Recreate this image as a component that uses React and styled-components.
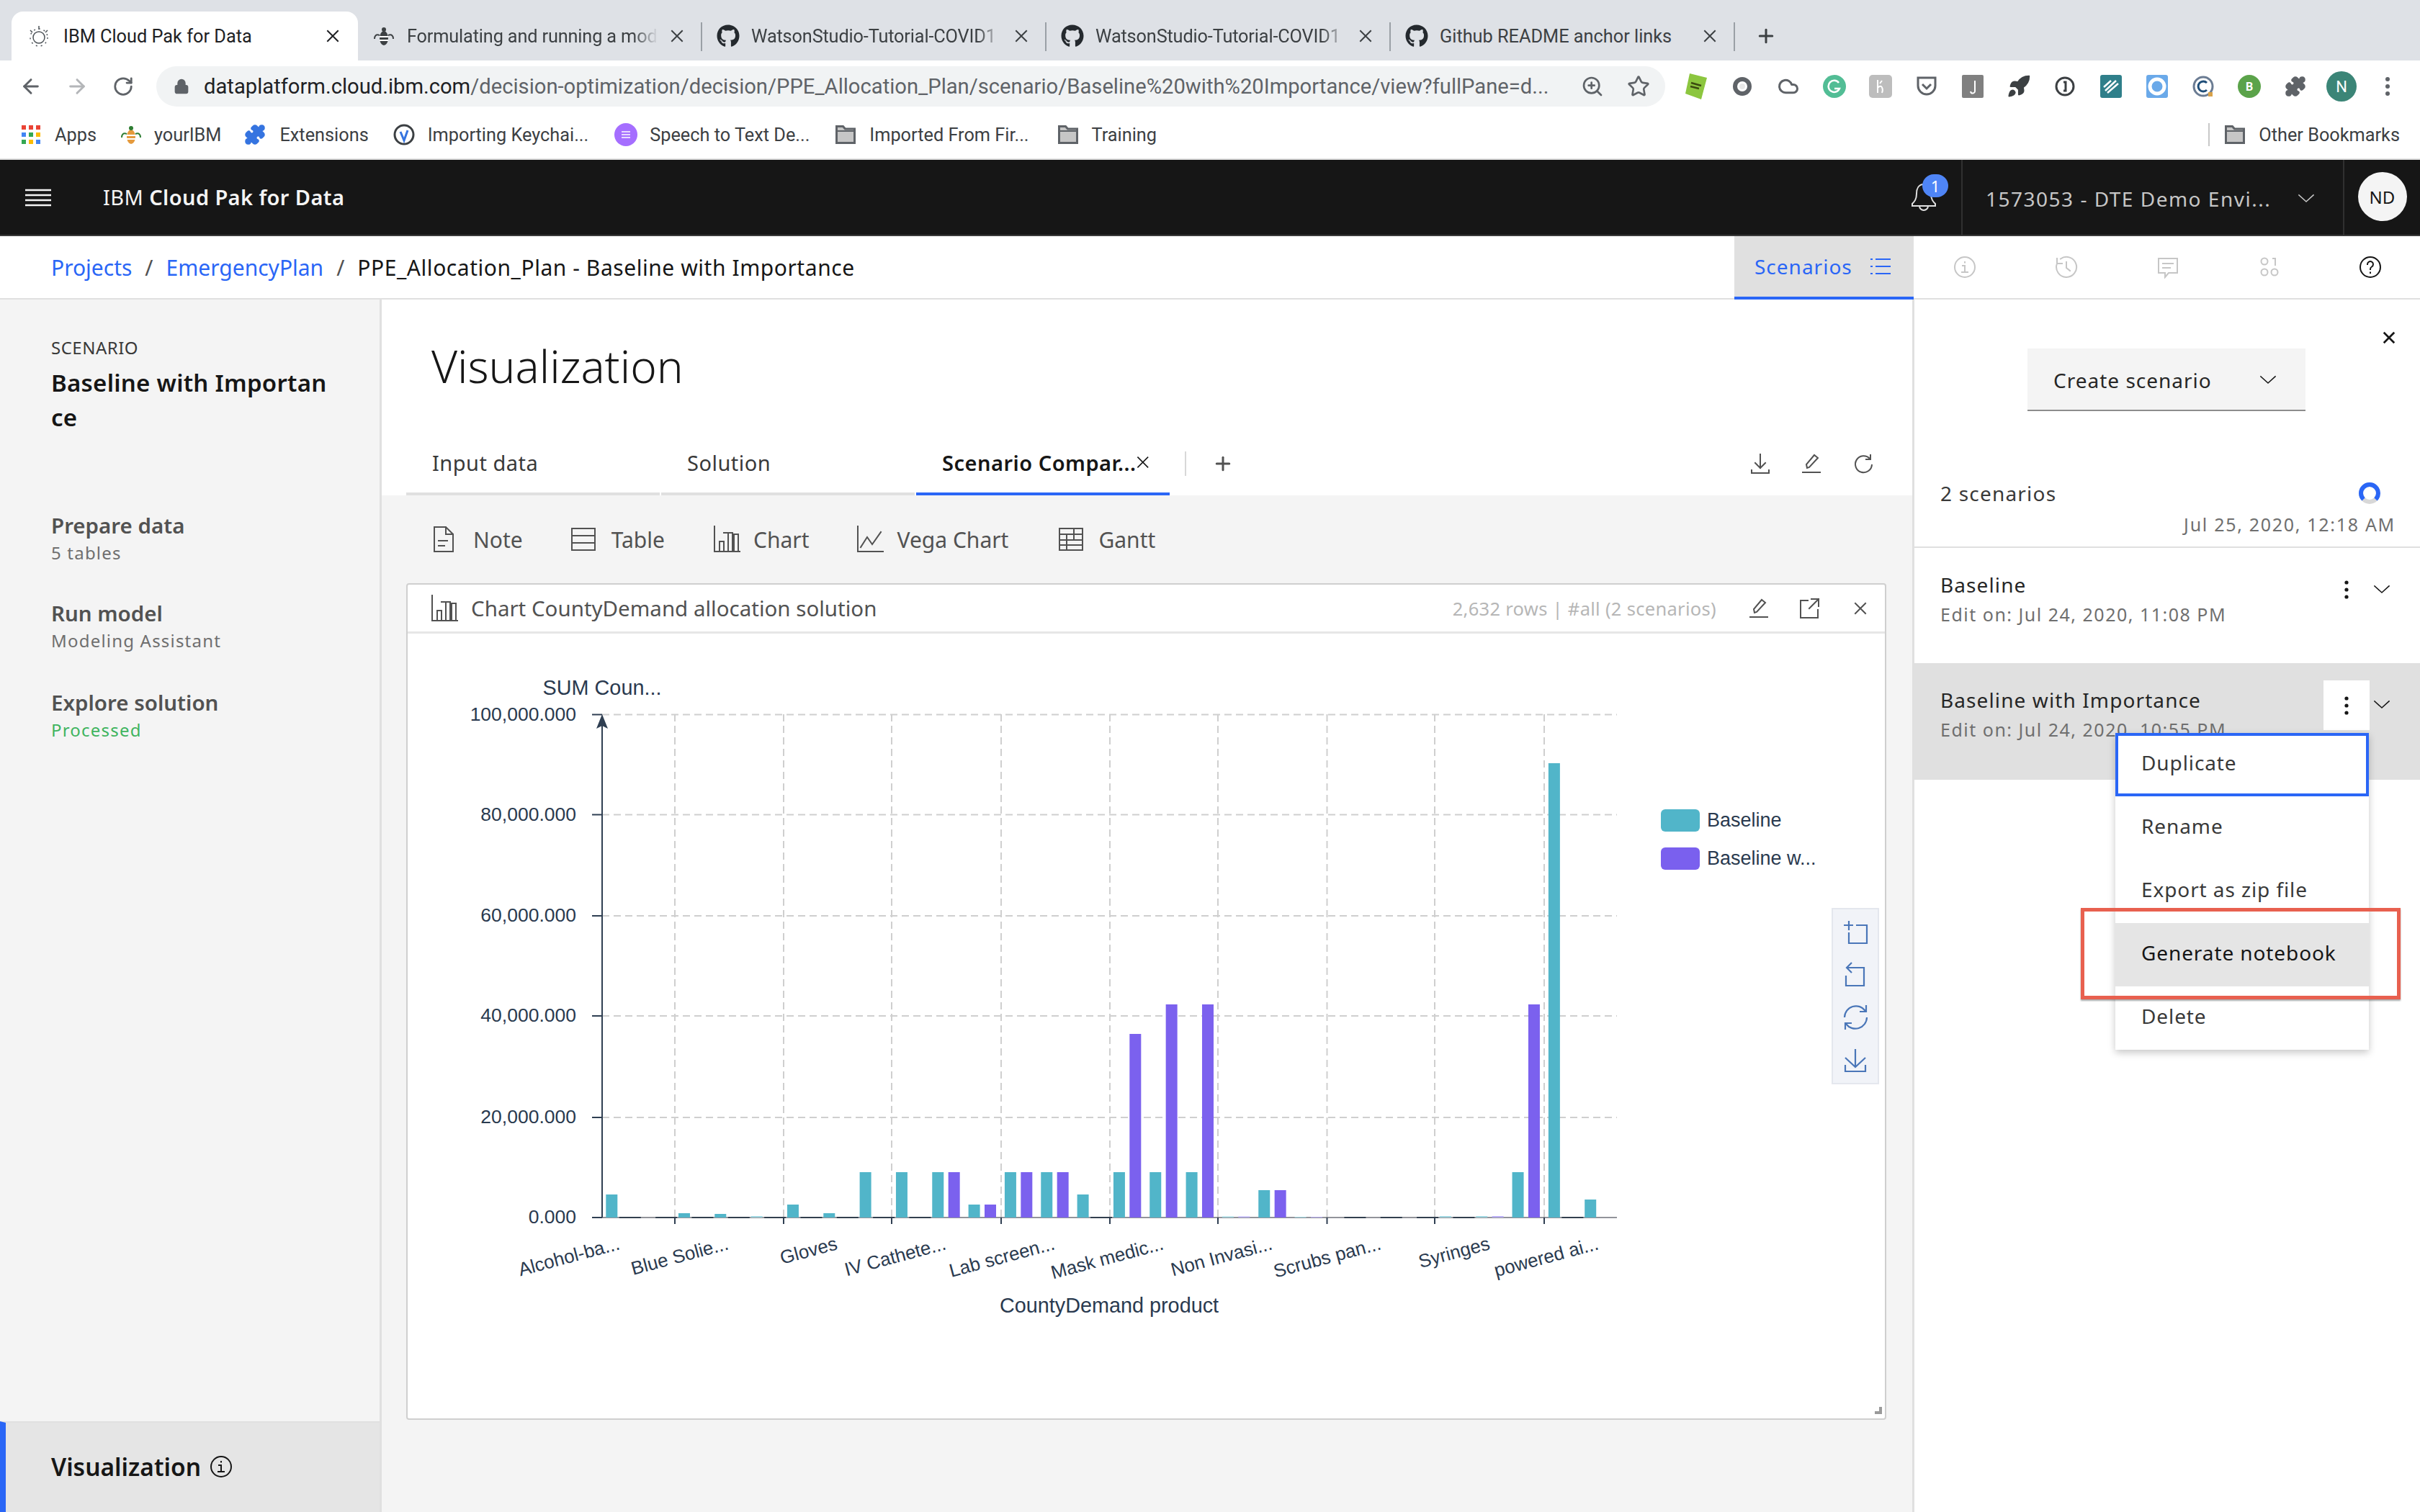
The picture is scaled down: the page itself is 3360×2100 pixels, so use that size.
import React from 'react';
import styled, { createGlobalStyle } from 'styled-components';
import { FaGithub } from 'react-icons/fa';
import { ArrowLeft, ArrowRight, RotateCw, Lock, ZoomIn, Star, Puzzle, Rocket, Cloud, Plus } from 'lucide-react';

const Global = createGlobalStyle`
  html, body { margin: 0; padding: 0; background: #fff; }
  * { box-sizing: border-box; }
  body { font-family: "Noto Sans", sans-serif; }
`;

const BLUE = '#2a66f6';
const PLEX = '"Noto Sans", "Open Sans", sans-serif';
const UI = 'Roboto, "Liberation Sans", sans-serif';

const Page = styled.div`width:3360px;height:2100px;display:flex;flex-direction:column;overflow:hidden;position:relative;color:#161616;`;

/* ---------- Browser chrome ---------- */
const TabStrip = styled.div`height:84px;flex:none;background:#dee1e6;display:flex;align-items:flex-end;padding-left:16px;font:25.3px ${UI};color:#3c4043;`;
const BrowserTab = styled.div`
  width:${p=>p.$active?'481px':'476px'};height:68px;display:grid;grid-template-columns:32px 1fr 24px;column-gap:${p=>p.$active?'18px':'16px'};align-items:center;
  padding:${p=>p.$active?'0 21px 0 22px':'0 19px 0 20px'};background:${p=>p.$active?'#fff':'transparent'};border-radius:${p=>p.$active?'16px 16px 0 0':'0'};
  color:${p=>p.$active?'#202124':'#3c4043'};
`;
const TabTitle = styled.span`white-space:nowrap;overflow:hidden;${p=>p.$fade?'letter-spacing:-.15px;-webkit-mask-image:linear-gradient(90deg,#000 90%,transparent);mask-image:linear-gradient(90deg,#000 90%,transparent);':''}`;
const TabSep = styled.span`width:2px;height:40px;background:#9aa0a6;align-self:flex-end;margin-bottom:13px;`;
const NewTab = styled.span`margin-left:28px;align-self:flex-end;margin-bottom:19px;display:flex;color:#3c4043;`;

const Toolbar = styled.div`height:72px;flex:none;padding:8px 0 8px 11px;display:flex;align-items:center;background:#fff;`;
const NavBtn = styled.span`width:64px;display:flex;justify-content:center;color:${p=>p.$dim?'#b4b6b9':'#5f6368'};`;
const Omnibox = styled.div`width:2095px;height:56px;margin:0 11px 0 14px;background:#f1f3f4;border-radius:28px;display:flex;align-items:center;padding:0 21px 0 24px;color:#5f6368;`;
const Url = styled.span`flex:1;font:29.2px ${UI};margin-left:20px;white-space:nowrap;color:#5f6368;overflow:hidden;`;
const UrlHost = styled.span`color:#202124;`;
const OmniIcons = styled.span`display:flex;gap:32px;align-items:center;color:#5f6368;`;
const ExtBtn = styled.span`width:64px;height:56px;flex:none;display:flex;align-items:center;justify-content:center;`;

const Bookmarks = styled.div`height:66px;flex:none;background:#fff;border-bottom:2px solid #e0e0e0;display:flex;align-items:center;padding:0 28px 2px 30px;font:25.3px ${UI};color:#3c4043;`;
const Bookmark = styled.span`display:flex;align-items:center;gap:${p=>p.$gap||16}px;margin-right:${p=>p.$mr||0}px;white-space:nowrap;`;
const BookmarkSep = styled.span`width:2px;height:32px;background:#c8c8c8;margin-left:auto;margin-right:21px;`;

/* ---------- Product nav ---------- */
const TopNav = styled.div`height:106px;flex:none;background:#161616;border-bottom:2px solid #393939;display:flex;align-items:stretch;color:#f4f4f4;`;
const Burger = styled.span`width:143px;flex:none;display:flex;align-items:center;padding-left:35px;`;
const Brand = styled.div`flex:1;display:flex;align-items:center;font:400 29px ${PLEX};letter-spacing:.4px;padding-bottom:2px;`;
const BrandStrong = styled.b`font-weight:600;margin-left:8px;`;
const BellWrap = styled.div`width:104px;flex:none;position:relative;display:flex;align-items:center;justify-content:center;`;
const Badge = styled.span`position:absolute;left:50px;top:20px;width:36px;height:32px;border-radius:16px;background:#4f85f6;color:#fff;font:22px ${PLEX};display:flex;align-items:center;justify-content:center;`;
const Account = styled.div`width:532px;flex:none;border-left:2px solid #303030;border-right:2px solid #303030;display:flex;align-items:center;padding:3px 39px 0 32px;font:28px ${PLEX};color:#c6c6c6;letter-spacing:1.5px;justify-content:space-between;`;
const AvatarCell = styled.div`width:105px;flex:none;display:flex;align-items:center;justify-content:center;`;
const Avatar = styled.span`width:68px;height:68px;border-radius:50%;background:#f4f4f4;color:#161616;font:24px ${PLEX};display:flex;align-items:center;justify-content:center;margin-top:-2px;`;

/* ---------- Breadcrumb ---------- */
const Crumbs = styled.div`height:88px;flex:none;border-bottom:2px solid #e0e0e0;display:flex;align-items:stretch;font:400 30px ${PLEX};`;
const CrumbText = styled.div`flex:1;display:flex;align-items:center;padding-left:71px;gap:18px;`;
const CrumbLink = styled.span`color:${BLUE};`;
const CrumbSlash = styled.span`color:#525252;`;
const CrumbLeaf = styled.span`letter-spacing:.55px;`;
const ScenarioTab = styled.div`width:249px;height:88px;background:#e0e0e0;border-bottom:4px solid ${BLUE};color:${BLUE};display:flex;align-items:center;padding-left:28px;gap:24px;font-size:28px;letter-spacing:1px;`;
const RailIcon = styled.span`width:${p=>p.$w||141}px;display:flex;justify-content:center;align-items:center;color:${p=>p.$dark?'#161616':'#c6c6c6'};`;

/* ---------- Columns ---------- */
const Columns = styled.div`flex:1;display:flex;min-height:0;`;
const Side = styled.aside`width:530px;flex:none;background:#f4f4f4;border-right:3px solid #e0e0e0;display:flex;flex-direction:column;padding-top:50px;`;
const SideLabel = styled.div`font:24px/34px ${PLEX};color:#393939;padding-left:71px;letter-spacing:.5px;`;
const SideTitle = styled.div`font:600 33px/48px ${PLEX};color:#161616;padding-left:71px;margin-top:8px;width:462px;word-break:break-all;letter-spacing:.25px;`;
const Step = styled.div`padding-left:71px;margin-top:${p=>p.$mt}px;`;
const StepName = styled.div`font:600 29.5px/40px ${PLEX};color:#525252;`;
const StepSub = styled.div`font:24px/36px ${PLEX};color:${p=>p.$ok?'#3fb45f':'#6f6f6f'};letter-spacing:1.2px;`;
const SideActive = styled.div`margin-top:auto;height:126px;background:#e5e5e5;border-top:2px solid #e0e0e0;border-left:8px solid ${BLUE};display:flex;align-items:center;padding-left:63px;gap:12px;font:600 33.5px ${PLEX};padding-bottom:2px;`;

const Main = styled.main`flex:1;min-width:0;display:flex;flex-direction:column;background:#f4f4f4;`;
const MainHead = styled.div`height:272px;flex:none;background:#fff;padding:0 34px;display:flex;flex-direction:column;`;
const PageTitle = styled.h1`margin:0;font:300 62px/92px ${PLEX};color:#161616;padding-top:46px;height:184px;padding-left:35px;`;
const ViewTabs = styled.div`height:88px;display:flex;align-items:stretch;`;
const ViewTab = styled.div`width:352px;margin-right:2px;border-bottom:4px solid ${p=>p.$on?BLUE:'#e0e0e0'};display:flex;align-items:center;padding:0 27px 0 36px;font:${p=>p.$on?600:400} 29px ${PLEX};letter-spacing:.5px;color:${p=>p.$on?'#161616':'#393939'};white-space:nowrap;justify-content:space-between;`;
const ViewSep = styled.span`width:2px;height:34px;background:#d8d8d8;align-self:center;margin:0 36px 0 19px;`;
const ViewActions = styled.div`margin-left:auto;display:flex;gap:42px;align-items:center;color:#525252;margin-right:19px;`;
const Bare = styled.span`display:flex;align-items:center;color:#525252;`;

const AddBar = styled.div`height:122px;flex:none;padding:0 0 0 71px;display:flex;align-items:center;`;
const AddItem = styled.span`display:flex;align-items:center;gap:${p=>p.$gap}px;margin-right:${p=>p.$mr||0}px;font:30px ${PLEX};color:#525252;`;

const Card = styled.section`width:2055px;height:1162px;margin-left:34px;background:#fff;border:2px solid #cfcfcf;border-radius:4px;display:flex;flex-direction:column;position:relative;`;
const CardHead = styled.header`height:68px;flex:none;border-bottom:3px solid #e6e6e6;display:flex;align-items:center;padding:0 24px 0 32px;gap:18px;`;
const CardTitle = styled.span`font:29.5px ${PLEX};color:#525252;flex:1;`;
const CardMeta = styled.span`font:25.5px ${PLEX};color:#b6b6b6;margin-right:26px;letter-spacing:.3px;`;
const CardActs = styled.span`display:flex;gap:40px;align-items:center;color:#525252;& > svg:last-child{margin-left:6px;}`;
const ChartSvg = styled.svg`display:block;flex:1;width:100%;min-height:0;`;
const Grip = styled.span`position:absolute;right:4px;bottom:6px;width:10px;height:10px;border-right:4px solid #9a9a9a;border-bottom:4px solid #9a9a9a;`;

/* ---------- Right panel ---------- */
const Panel = styled.aside`width:705px;flex:none;background:#fff;border-left:3px solid #e0e0e0;position:relative;display:flex;flex-direction:column;`;
const PanelClose = styled.div`height:68px;display:flex;justify-content:flex-end;align-items:flex-end;padding:0 34px 6px 0;color:#161616;`;
const CreateBtn = styled.div`width:386px;height:87px;margin-left:157px;background:#f4f4f4;border-bottom:2px solid #8d8d8d;display:flex;align-items:center;justify-content:space-between;padding:2px 40px 0 36px;font:28px ${PLEX};color:#262626;letter-spacing:1px;`;
const CountBlock = styled.div`height:190px;padding:92px 34px 0 36px;border-bottom:2px solid #e0e0e0;`;
const CountRow = styled.div`display:flex;justify-content:space-between;align-items:center;font:28px/44px ${PLEX};color:#393939;letter-spacing:1.2px;padding-right:19px;`;
const CountDate = styled.div`text-align:right;font:25px/34px ${PLEX};color:#6f6f6f;letter-spacing:1.7px;margin-top:4px;`;
const Scenario = styled.div`height:${p=>p.$h}px;padding:30px 0 0 36px;background:${p=>p.$on?'#e0e0e0':'transparent'};display:flex;justify-content:space-between;`;
const ScenarioName = styled.div`font:28px/42px ${PLEX};color:#262626;letter-spacing:1.1px;`;
const ScenarioSub = styled.div`font:25px/40px ${PLEX};color:#6f6f6f;letter-spacing:1.5px;`;
const RowIcons = styled.div`display:flex;align-items:flex-start;height:56px;`;
const KebabBox = styled.span`width:64px;height:${p=>p.$on?'69px':'56px'};display:flex;align-items:center;justify-content:center;background:${p=>p.$on?'#fff':'transparent'};margin:${p=>p.$on?'-6px':'0'} -8px 0 0;position:relative;`;
const RowChevron = styled.span`width:50px;height:56px;display:flex;align-items:center;justify-content:center;margin-right:28px;`;

const Menu = styled.ul`position:absolute;left:279px;top:602px;width:352px;margin:0;padding:0;list-style:none;background:#fff;box-shadow:0 4px 10px rgba(0,0,0,.22);`;
const MenuItem = styled.li`height:88px;display:flex;align-items:center;padding:0 0 6px ${p=>p.$focus?'32px':'36px'};font:28px ${PLEX};letter-spacing:.9px;color:${p=>p.$hot?'#161616':'#393939'};background:${p=>p.$hot?'#e5e5e5':'#fff'};border:${p=>p.$focus?'4px solid '+BLUE:'none'};`;
const Callout = styled.div`position:absolute;left:231px;top:845px;width:444px;height:127px;border:5px solid #e8604f;box-shadow:0 2px 2px rgba(0,0,0,.35);pointer-events:none;`;

/* ---------- Icons ---------- */
const G = ({ s = 32, w, h, v = '0 0 32 32', sw = 2, c = 'currentColor', children }) => (
  <svg width={w || s} height={h || s} viewBox={v} fill="none" stroke={c} strokeWidth={sw} strokeLinecap="square">{children}</svg>
);
const Chevron = ({ s = 24, c = '#161616' }) => <G s={s} v="0 0 24 24" c={c} sw={1.6}><path d="M2 7l10 9 10-9" /></G>;
const Kebab = () => <svg width="6" height="26" viewBox="0 0 6 26"><circle cx="3" cy="3" r="2.6" fill="#161616"/><circle cx="3" cy="13" r="2.6" fill="#161616"/><circle cx="3" cy="23" r="2.6" fill="#161616"/></svg>;
const NoteI = () => <G w={30} h={38} v="0 0 30 38"><path d="M2 2h16l10 10v24H2zM18 2v10h10M8 21h12M8 28h8"/></G>;
const TableI = () => <G w={36} h={36} v="0 0 36 36"><path d="M2 3h32v30H2zM2 13h32M2 23h32"/></G>;
const BarI = ({ c }) => <G w={38} h={38} v="0 0 38 38" c={c}><path d="M2 1v35h35M9 36V22h6v14M21 36V10h-6M21 36h6V10h-6M15 36V22"/><path d="M29 36V12h6v24"/></G>;
const LineI = () => <G w={38} h={38} v="0 0 38 38"><path d="M2 1v35h35M6 30l9-14 7 10 12-17"/></G>;
const GanttI = () => <G w={36} h={36} v="0 0 36 36"><path d="M2 3h32v30H2zM2 11h32M2 19h32M2 26h32M12 11v22M22 3v16"/></G>;
const DownI = ({ c }) => <G w={28} h={30} v="0 0 28 30" c={c}><path d="M14 2v19M7 14l7 7 7-7M2 24v4h24v-4"/></G>;
const EditI = () => <G w={30} h={30} v="0 0 30 30"><path d="M3 27h24M9 21l-1-5L19 3l5 4-12 13z"/></G>;
const RefreshI = () => <G w={30} h={30} v="0 0 30 30"><path d="M24 8A11.5 11.5 0 1 0 27 16M25 2v7h-7" strokeLinecap="butt"/></G>;
const ExportI = () => <G w={30} h={30} v="0 0 30 30"><path d="M13 4H3v24h24V17M18 2h10v10M28 2L15 15"/></G>;
const CloseX = ({ s = 20, sw = 2, c }) => <G s={s} v="0 0 20 20" sw={sw} c={c}><path d="M3 3l14 14M17 3L3 17"/></G>;
const ListI = () => <G s={30} v="0 0 30 30" sw={2}><path d="M9 5h19M9 15h19M9 25h19M2 5h1M2 15h1M2 25h1"/></G>;
const InfoI = ({ s = 32 }) => <G s={s} v="0 0 32 32"><circle cx="16" cy="16" r="14"/><path d="M16 9v.5M13 14h3v9M12 23h8"/></G>;
const HistoryI = () => <G s={32} v="0 0 32 32"><path d="M8 4.5A14 14 0 1 1 3 11M3 4v7h7M16 9v8l5 4"/></G>;
const ChatI = () => <G s={32} v="0 0 32 32"><path d="M3 4h26v20H17l-5 6v-6H3zM9 11h14M9 17h10"/></G>;
const OneZeroI = () => <G s={32} v="0 0 32 32"><circle cx="9" cy="8" r="4.5"/><path d="M21 4h3v9"/><circle cx="9" cy="23" r="4.5"/><circle cx="23" cy="23" r="4.5"/></G>;
const HelpI = () => <G s={32} v="0 0 32 32"><circle cx="16" cy="16" r="14"/><path d="M12 12a4 4 0 1 1 6 3.5c-1.400.8-2 1.600-2 3.500M16 23.500v.5"/></G>;
const Hamburger = () => <G w={36} h={26} v="0 0 36 26" c="#f4f4f4" sw={2.400}><path d="M1 3h34M1 10h34M1 17h34M1 24h34"/></G>;
const BellI = () => <G w={38} h={42} v="0 0 38 42" c="#e0e0e0"><path d="M19 3c-7 0-10 6-10 13 0 8-3 11-6 14v3h32v-3c-3-3-6-6-6-14 0-7-3-13-10-13zM13 33a6 6 0 0 0 12 0"/></G>;
const Folder = () => <svg width="28" height="26" viewBox="0 0 28 26"><path d="M1.500 5V1.500h9l3 3.500h13v19.500h-25z" fill="#c6c6c6" stroke="#5f6368" strokeWidth="3"/><path d="M2 8h24" stroke="#5f6368" strokeWidth="2"/></svg>;
const AppsI = () => <svg width="26" height="26" viewBox="0 0 26 26">{[['#ea4335','#ea4335','#ea4335'],['#4285f4','#34a853','#fbbc05'],['#34a853','#fbbc05','#4285f4']].flatMap((r,y)=>r.map((c,x)=><rect key={x+'-'+y} x={x*10} y={y*10} width="6" height="6" fill={c}/>))}</svg>;
const Bee = ({ color = '#3c4043', alt }) => <svg width="32" height="32" viewBox="0 0 32 32"><ellipse cx="16" cy="19" rx="6" ry="10" fill={alt||color} /><circle cx="16" cy="7" r="3" fill={color}/><path d="M10 17h12M10 22h12" stroke="#fff" strokeWidth="2"/><path d="M10 15C5 13 3 16 3 20M22 15c5-2 7 1 7 5" stroke={color} strokeWidth="2" fill="none"/></svg>;
const CpdIcon = () => <svg width="32" height="32" viewBox="0 0 32 32" fill="none" stroke="#4d5358" strokeWidth="1.500"><circle cx="16" cy="18" r="8"/><circle cx="16" cy="18" r="12" strokeDasharray="2 5"/><path d="M16 2v5M4 8l3 3M28 8l-3 3"/></svg>;
const Github = () => <FaGithub size={32} color="#24292e" />;

const Ext = {
  tag: <svg width="30" height="36" viewBox="0 0 30 36"><path d="M6 0l24 6-8 30L0 28z" fill="#8cc63f"/><path d="M8 13l14 4M7 18l12 3" stroke="#3b4a10" strokeWidth="2.500"/></svg>,
  ring: <svg width="28" height="28" viewBox="0 0 28 28" fill="none"><circle cx="14" cy="14" r="10" stroke="#5f6368" strokeWidth="6"/><circle cx="14" cy="14" r="4" fill="#e8e8e8"/></svg>,
  cloud: <Cloud size={30} color="#5f6368" strokeWidth={2.400}/>,
  g: <svg width="32" height="32" viewBox="0 0 32 32"><circle cx="16" cy="16" r="16" fill="#52bd95"/><path d="M22 11a8 8 0 1 0 1 8h-7" stroke="#fff" strokeWidth="2.500" fill="none"/></svg>,
  k: <svg width="32" height="32" viewBox="0 0 32 32"><rect width="32" height="32" rx="5" fill="#bdbdbd"/><path d="M12 7v18M12 18c6-6 8 2 6 7M18 8l-3 4" stroke="#fff" strokeWidth="2" fill="none"/></svg>,
  pocket: <svg width="30" height="30" viewBox="0 0 30 30" fill="none"><path d="M3 3h24v11a12 12 0 0 1-24 0z" stroke="#5f6368" strokeWidth="3"/><path d="M9 12l6 6 6-6" stroke="#5f6368" strokeWidth="3"/></svg>,
  j: <svg width="30" height="32" viewBox="0 0 30 32"><rect width="30" height="32" rx="2" fill="#808080"/><path d="M18 8v14a3 3 0 0 1-6 1" stroke="#fff" strokeWidth="2" fill="none"/></svg>,
  rocket: <Rocket size={34} color="#3c4043" fill="#3c4043" strokeWidth={1.500}/>,
  one: <svg width="28" height="28" viewBox="0 0 28 28" fill="none"><circle cx="14" cy="14" r="12" stroke="#3c4043" strokeWidth="3"/><path d="M12 8h3v12h-3" stroke="#3c4043" strokeWidth="3"/></svg>,
  teal: <svg width="30" height="32" viewBox="0 0 30 32"><rect width="30" height="32" rx="3" fill="#2f7f8a"/><path d="M7 22L22 8M10 25L25 12M5 17L15 8" stroke="#fff" strokeWidth="2.500"/></svg>,
  blue: <svg width="30" height="32" viewBox="0 0 30 32"><rect width="30" height="32" rx="3" fill="#6aa9e9"/><circle cx="15" cy="16" r="10" fill="none" stroke="#fff" strokeWidth="5"/></svg>,
  c: <svg width="30" height="32" viewBox="0 0 30 32" fill="none"><circle cx="15" cy="16" r="13" stroke="#6b7c93" strokeWidth="3"/><path d="M20 11a7 7 0 1 0 0 10" stroke="#1f4e79" strokeWidth="3"/><rect x="22" y="24" width="6" height="6" fill="#d8a24a"/></svg>,
  b: <svg width="32" height="32" viewBox="0 0 32 32"><circle cx="16" cy="16" r="16" fill="#5ba34a"/><text x="16" y="22" textAnchor="middle" fontSize="16" fontFamily="Roboto" fontWeight="700" fill="#fff">B</text></svg>,
  puzzle: <Puzzle size={30} color="#5f6368" fill="#5f6368" />,
  n: <svg width="42" height="44" viewBox="0 0 42 44"><circle cx="21" cy="22" r="21" fill="#3b8577"/><text x="21" y="30" textAnchor="middle" fontSize="22" fontFamily="Roboto" fill="#fff">N</text></svg>,
  dots: <svg width="6" height="28" viewBox="0 0 6 28"><circle cx="3" cy="4" r="3" fill="#5f6368"/><circle cx="3" cy="14" r="3" fill="#5f6368"/><circle cx="3" cy="24" r="3" fill="#5f6368"/></svg>,
};

/* ---------- Chart data ---------- */
const X0 = 841.3, PITCH = 50.33, BW = 16, BASE = 1691;
const BARS = [
  [32, 0], [0, 0], [6, 0], [5, 0], [2, 0], [18, 0], [6, 0], [63, 0], [63, 0], [63, 63],
  [18, 18], [63, 63], [63, 63], [32, 0], [63, 255], [63, 296], [63, 296], [1.500, 1.500], [38, 38], [1, 1],
  [0, 0], [0, 0], [0, 0], [2, 0], [2, 2], [63, 296], [631, 0], [25, 0],
];
const YTICKS = [[992.5, '100,000.000'], [1131.5, '80,000.000'], [1272, '60,000.000'], [1411, '40,000.000'], [1552, '20,000.000'], [1691, '0.000']];
const XGRID = [937, 1088, 1238, 1390, 1541, 1691, 1842.5, 1992, 2144];
const XLABELS = ['Alcohol-ba...', 'Blue Solie...', 'Gloves', 'IV Cathete...', 'Lab screen...', 'Mask medic...', 'Non Invasi...', 'Scrubs pan...', 'Syringes', 'powered ai...'];
const INK = '#2a3a4f';
const TOOL = '#4a76b8';

const Chart = () => (
  <ChartSvg viewBox="566 880 2051 1090" preserveAspectRatio="xMinYMin meet">
    <g stroke="#cfcfcf" strokeWidth="2" strokeDasharray="10 6" fill="none">
      {YTICKS.slice(0, 5).map(([y]) => <path key={y} d={`M836 ${y}H2245`} />)}
      {XGRID.map(x => <path key={x} d={`M${x} 992V1691`} />)}
    </g>
    <path d="M836 1691H2245" stroke="#6e7079" strokeWidth="1.500" />
    {BARS.map(([t, p], i) => {
      const x = X0 + PITCH * i;
      return (
        <g key={i}>
          {t > 0 && <rect x={x} y={BASE - t} width={BW} height={t} fill={t < 3 ? '#9ed6e0' : '#51b5c9'} />}
          {p > 0 && <rect x={x + 22.4} y={BASE - p} width={BW} height={p} fill={p < 3 ? '#b9adf5' : '#7b61ee'} />}
          {p === 0 && i < 27 && <rect x={x + 18.500} y={BASE - 1} width="30" height="2" fill="#33404f" />}
        </g>
      );
    })}
    <g stroke="#2f3f52" strokeWidth="2">
      <path d="M836 994V1691" />
      {YTICKS.map(([y]) => <path key={y} d={`M822 ${y}H836`} />)}
      {XGRID.map(x => <path key={x} d={`M${x} 1691v9`} />)}
    </g>
    <path d="M836 992l8 20-8-4-8 4z" fill="#2f3f52" />
    <g fontFamily='"Liberation Sans", sans-serif' fill={INK} fontSize="26">
      {YTICKS.map(([y, t]) => <text key={t} x="800" y={y + 8} fontSize="26.500" textAnchor="end">{t}</text>)}
      {XLABELS.map((t, i) => <text key={t} textAnchor="end" transform={`translate(${862 + 151 * i} 1735) rotate(-15)`}>{t}</text>)}
      <text x="836" y="965" textAnchor="middle" fontSize="28.800">SUM Coun...</text>
      <text x="1540" y="1823" textAnchor="middle" fontSize="28.800">CountyDemand product</text>
      <text x="2370" y="1148" fontSize="27">Baseline</text>
      <text x="2370" y="1201" fontSize="27">Baseline w...</text>
    </g>
    <rect x="2306" y="1124" width="54" height="31" rx="6" fill="#51b5c9" />
    <rect x="2306" y="1177" width="54" height="31" rx="6" fill="#7a60ee" />
    <rect x="2544" y="1262" width="64" height="243" fill="#f1f3f8" stroke="#e4e7ee" strokeWidth="2" />
    <g fill="none" stroke={TOOL} strokeWidth="2.200">
      <path d="M2560 1285h13M2567 1279v13M2577 1285h15v25h-25v-15" />
      <path d="M2564 1344h24v25h-25v-14M2571 1337l-7 7 7 7" />
      <path d="M2561 1413a16 16 0 0 1 29-9M2592 1413a16 16 0 0 1-29 9M2591 1396v9h-9M2562 1430v-9h9" />
      <path d="M2576 1457v25M2562 1469l14 13 14-13M2562 1479v9h28v-9" />
    </g>
  </ChartSvg>
);

const VIEW_URL = '/decision-optimization/decision/PPE_Allocation_Plan/scenario/Baseline%20with%20Importance/view?fullPane=d...';

export default function App() {
  return (
    <Page>
      <Global />
      <TabStrip>
        <BrowserTab $active><CpdIcon /><TabTitle>IBM Cloud Pak for Data</TabTitle><CloseX s={20} /></BrowserTab>
        <BrowserTab><Bee /><TabTitle $fade>Formulating and running a mod</TabTitle><CloseX s={20} /></BrowserTab>
        <TabSep />
        <BrowserTab><Github /><TabTitle $fade>WatsonStudio-Tutorial-COVID1</TabTitle><CloseX s={20} /></BrowserTab>
        <TabSep />
        <BrowserTab><Github /><TabTitle $fade>WatsonStudio-Tutorial-COVID1</TabTitle><CloseX s={20} /></BrowserTab>
        <TabSep />
        <BrowserTab><Github /><TabTitle>Github README anchor links</TabTitle><CloseX s={20} /></BrowserTab>
        <TabSep />
        <NewTab><Plus size={30} strokeWidth={2.400} /></NewTab>
      </TabStrip>

      <Toolbar>
        <NavBtn><ArrowLeft size={32} strokeWidth={2.200} /></NavBtn>
        <NavBtn $dim><ArrowRight size={32} strokeWidth={2.200} /></NavBtn>
        <NavBtn><RotateCw size={30} strokeWidth={2.200} /></NavBtn>
        <Omnibox>
          <Lock size={22} fill="#5f6368" strokeWidth={2.400} />
          <Url><UrlHost>dataplatform.cloud.ibm.com</UrlHost>{VIEW_URL}</Url>
          <OmniIcons><ZoomIn size={32} strokeWidth={2} /><Star size={32} strokeWidth={2} /></OmniIcons>
        </Omnibox>
        {Object.entries(Ext).map(([k, node]) => <ExtBtn key={k}>{node}</ExtBtn>)}
      </Toolbar>

      <Bookmarks>
        <Bookmark $gap={20} $mr={32}><AppsI />Apps</Bookmark>
        <Bookmark $mr={32}><Bee color="#2e7d32" alt="#e59a3c" />yourIBM</Bookmark>
        <Bookmark $gap={19} $mr={34}><Puzzle size={30} color="#3574e0" fill="#3574e0" />Extensions</Bookmark>
        <Bookmark $gap={18} $mr={36}><svg width="30" height="32" viewBox="0 0 30 32"><circle cx="15" cy="16" r="13" fill="#fff" stroke="#3c4043" strokeWidth="3"/><path d="M10 12l5 12 5-14" stroke="#3574e0" strokeWidth="3" fill="none"/></svg>Importing Keychai...</Bookmark>
        <Bookmark $gap={17} $mr={36}><svg width="32" height="32" viewBox="0 0 32 32"><circle cx="16" cy="16" r="16" fill="#a56eff"/><path d="M10 12h12M10 16h12M10 20h12" stroke="#e8daff" strokeWidth="2"/></svg>Speech to Text De...</Bookmark>
        <Bookmark $gap={19} $mr={40}><Folder />Imported From Fir...</Bookmark>
        <Bookmark $gap={19}><Folder />Training</Bookmark>
        <BookmarkSep />
        <Bookmark $gap={19}><Folder />Other Bookmarks</Bookmark>
      </Bookmarks>

      <TopNav>
        <Burger><Hamburger /></Burger>
        <Brand>IBM<BrandStrong>Cloud Pak for Data</BrandStrong></Brand>
        <BellWrap><BellI /><Badge>1</Badge></BellWrap>
        <Account>1573053 - DTE Demo Envi...<Chevron c="#c6c6c6" /></Account>
        <AvatarCell><Avatar>ND</Avatar></AvatarCell>
      </TopNav>

      <Crumbs>
        <CrumbText>
          <CrumbLink>Projects</CrumbLink><CrumbSlash>/</CrumbSlash>
          <CrumbLink>EmergencyPlan</CrumbLink><CrumbSlash>/</CrumbSlash>
          <CrumbLeaf>PPE_Allocation_Plan - Baseline with Importance</CrumbLeaf>
        </CrumbText>
        <ScenarioTab>Scenarios<ListI /></ScenarioTab>
        <RailIcon><InfoI /></RailIcon>
        <RailIcon><HistoryI /></RailIcon>
        <RailIcon><ChatI /></RailIcon>
        <RailIcon><OneZeroI /></RailIcon>
        <RailIcon $w={139} $dark><HelpI /></RailIcon>
      </Crumbs>

      <Columns>
        <Side>
          <SideLabel>SCENARIO</SideLabel>
          <SideTitle>Baseline with Importance</SideTitle>
          <Step $mt={106}><StepName>Prepare data</StepName><StepSub>5 tables</StepSub></Step>
          <Step $mt={46}><StepName>Run model</StepName><StepSub>Modeling Assistant</StepSub></Step>
          <Step $mt={48}><StepName>Explore solution</StepName><StepSub $ok>Processed</StepSub></Step>
          <SideActive>Visualization <InfoI s={32} /></SideActive>
        </Side>

        <Main>
          <MainHead>
            <PageTitle>Visualization</PageTitle>
            <ViewTabs>
              <ViewTab>Input data</ViewTab>
              <ViewTab>Solution</ViewTab>
              <ViewTab $on>Scenario Compar...<CloseX s={20} sw={1.600} /></ViewTab>
              <ViewSep />
              <Bare><Plus size={30} strokeWidth={2.400} /></Bare>
              <ViewActions><DownI /><EditI /><RefreshI /></ViewActions>
            </ViewTabs>
          </MainHead>
          <AddBar>
            <AddItem $gap={26} $mr={66}><NoteI />Note</AddItem>
            <AddItem $gap={21} $mr={67}><TableI />Table</AddItem>
            <AddItem $gap={18} $mr={65}><BarI />Chart</AddItem>
            <AddItem $gap={19} $mr={69}><LineI />Vega Chart</AddItem>
            <AddItem $gap={20}><GanttI />Gantt</AddItem>
          </AddBar>
          <Card>
            <CardHead>
              <BarI c="#525252" />
              <CardTitle>Chart CountyDemand allocation solution</CardTitle>
              <CardMeta>2,632 rows | #all (2 scenarios)</CardMeta>
              <CardActs><EditI /><ExportI /><CloseX s={20} /></CardActs>
            </CardHead>
            <Chart />
            <Grip />
          </Card>
        </Main>

        <Panel>
          <PanelClose><CloseX s={18} sw={3} /></PanelClose>
          <CreateBtn>Create scenario<Chevron /></CreateBtn>
          <CountBlock>
            <CountRow>2 scenarios
              <svg width="34" height="34" viewBox="0 0 34 34" fill="none"><circle cx="17" cy="17" r="12" stroke="#d8d8d8" strokeWidth="6"/><path d="M8.500 25.500A12 12 0 1 1 25.500 25.500" stroke={BLUE} strokeWidth="6"/></svg>
            </CountRow>
            <CountDate>Jul 25, 2020, 12:18 AM</CountDate>
          </CountBlock>
          <Scenario $h={160}>
            <div><ScenarioName>Baseline</ScenarioName><ScenarioSub>Edit on: Jul 24, 2020, 11:08 PM</ScenarioSub></div>
            <RowIcons><KebabBox><Kebab /></KebabBox><RowChevron><Chevron /></RowChevron></RowIcons>
          </Scenario>
          <Scenario $h={162} $on>
            <div><ScenarioName>Baseline with Importance</ScenarioName><ScenarioSub>Edit on: Jul 24, 2020, 10:55 PM</ScenarioSub></div>
            <RowIcons><KebabBox $on><Kebab /></KebabBox><RowChevron><Chevron /></RowChevron></RowIcons>
          </Scenario>
          <Menu>
            <MenuItem $focus>Duplicate</MenuItem>
            <MenuItem>Rename</MenuItem>
            <MenuItem>Export as zip file</MenuItem>
            <MenuItem $hot>Generate notebook</MenuItem>
            <MenuItem>Delete</MenuItem>
          </Menu>
          <Callout />
        </Panel>
      </Columns>
    </Page>
  );
}
